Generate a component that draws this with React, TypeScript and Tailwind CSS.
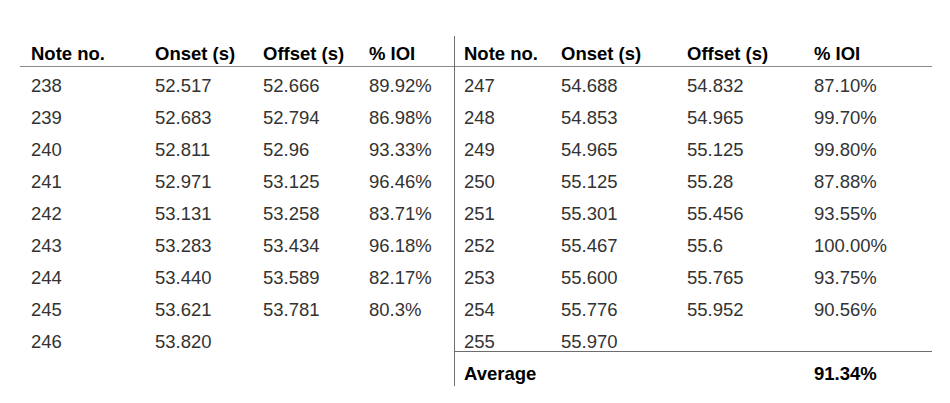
const left = [
  ['238', '52.517', '52.666', '89.92%'],
  ['239', '52.683', '52.794', '86.98%'],
  ['240', '52.811', '52.96', '93.33%'],
  ['241', '52.971', '53.125', '96.46%'],
  ['242', '53.131', '53.258', '83.71%'],
  ['243', '53.283', '53.434', '96.18%'],
  ['244', '53.440', '53.589', '82.17%'],
  ['245', '53.621', '53.781', '80.3%'],
  ['246', '53.820', '', ''],
]

const right = [
  ['247', '54.688', '54.832', '87.10%'],
  ['248', '54.853', '54.965', '99.70%'],
  ['249', '54.965', '55.125', '99.80%'],
  ['250', '55.125', '55.28', '87.88%'],
  ['251', '55.301', '55.456', '93.55%'],
  ['252', '55.467', '55.6', '100.00%'],
  ['253', '55.600', '55.765', '93.75%'],
  ['254', '55.776', '55.952', '90.56%'],
]

const headers = ['Note no.', 'Onset (s)', 'Offset (s)', '% IOI']

const leftCols = 'grid grid-cols-[124px_108px_106px_1fr] pl-[11px]'
const rightCols = 'grid grid-cols-[97px_126px_127px_1fr] pl-[9px]'

export default function App() {
  return (
    <div
      className="h-[403px] w-[950px] bg-white pt-[36px] pl-[20px] text-[18.5px]"
      style={{ fontFamily: '"Liberation Sans", Arial, sans-serif' }}
    >
      <div className="flex w-[912px]">
        {/* left half */}
        <div className="w-[434px]">
          <div className={`${leftCols} h-[31px] items-end border-b border-[#8a8a8a] pb-[1px] font-bold leading-[22px] text-black`}>
            {headers.map((h) => (
              <span key={h}>{h}</span>
            ))}
          </div>
          <div className="pt-[3px] text-[#333333]">
            {left.map((row) => (
              <div key={row[0]} className={`${leftCols} h-[32px] items-center leading-[22px]`}>
                {row.map((cell, i) => (
                  <span key={i}>{cell}</span>
                ))}
              </div>
            ))}
          </div>
        </div>

        {/* right half */}
        <div className="h-[350px] flex-1 border-l border-[#6e6e6e]">
          <div className={`${rightCols} h-[31px] items-end border-b border-[#8a8a8a] pb-[1px] font-bold leading-[22px] text-black`}>
            {headers.map((h) => (
              <span key={h}>{h}</span>
            ))}
          </div>
          <div className="pt-[3px] text-[#333333]">
            {right.map((row) => (
              <div key={row[0]} className={`${rightCols} h-[32px] items-center leading-[22px]`}>
                {row.map((cell, i) => (
                  <span key={i}>{cell}</span>
                ))}
              </div>
            ))}
            <div className={`${rightCols} h-[26px] items-start border-b border-[#6e6e6e] pt-[5px] leading-[22px]`}>
              <span>255</span>
              <span>55.970</span>
            </div>
            <div className={`${rightCols} pt-[11px] font-bold leading-[22px] text-black`}>
              <span>Average</span>
              <span />
              <span />
              <span>91.34%</span>
            </div>
          </div>
        </div>
      </div>
    </div>
  )
}
